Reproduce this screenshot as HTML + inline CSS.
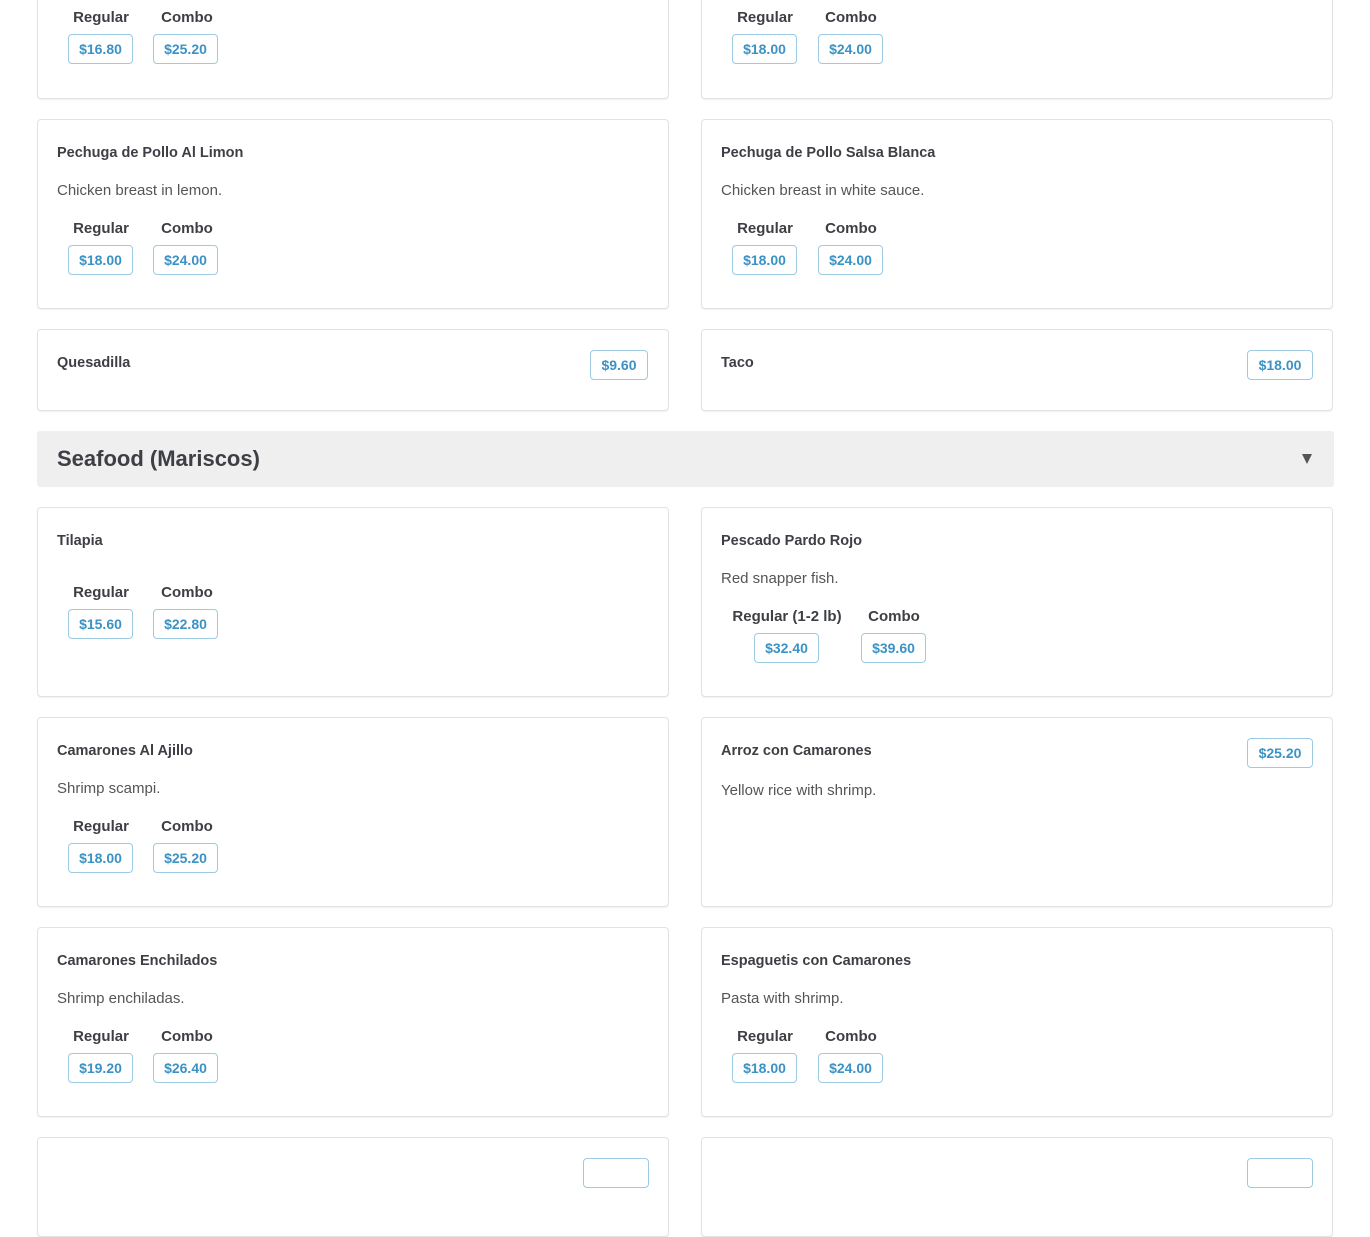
<!DOCTYPE html>
<html><head><meta charset="utf-8">
<style>
*{margin:0;padding:0;box-sizing:border-box}
body{width:1370px;height:1160px;background:#fff;font-family:"Liberation Sans",sans-serif;position:relative;overflow:hidden;color:#3d3f44}
.c{position:absolute;width:632px;border:1px solid #e2e2e2;border-radius:4px;background:#fff;box-shadow:0 1px 1px rgba(0,0,0,.06)}
.l{left:37px}.r{left:701px}
.t{position:absolute;left:19px;font-weight:bold;font-size:14.5px;line-height:20px;color:#3d3f44;white-space:nowrap}
.d{position:absolute;left:19px;font-size:15px;line-height:20px;color:#555;white-space:nowrap}
.lb{position:absolute;font-weight:bold;font-size:15px;line-height:20px;color:#3d3f44;text-align:center;width:120px;white-space:nowrap}
.p{position:absolute;height:30px;border:1px solid #9ccbe3;border-radius:4px;color:#3b92c4;font-weight:bold;font-size:14px;line-height:28px;text-align:center;width:65px;background:#fff}
.h{position:absolute;left:37px;top:431px;width:1297px;height:56px;background:#efefef;border-radius:3px}
.h span{position:absolute;left:20px;top:13px;font-size:22px;font-weight:bold;line-height:30px;color:#3d3f44}
.h i{position:absolute;right:22px;top:23px;width:0;height:0;border-left:5px solid transparent;border-right:5px solid transparent;border-top:10px solid #555}
</style></head><body>

<div class="c l" style="top:-92px;height:191px">
 <div class="lb" style="left:3px;top:99px">Regular</div><div class="lb" style="left:89px;top:99px">Combo</div>
 <div class="p" style="left:30px;top:125px">$16.80</div><div class="p" style="left:115px;top:125px">$25.20</div>
</div>
<div class="c r" style="top:-92px;height:191px">
 <div class="lb" style="left:3px;top:99px">Regular</div><div class="lb" style="left:89px;top:99px">Combo</div>
 <div class="p" style="left:30px;top:125px">$18.00</div><div class="p" style="left:116px;top:125px">$24.00</div>
</div>

<div class="c l" style="top:119px;height:190px">
 <div class="t" style="top:23px">Pechuga de Pollo Al Limon</div>
 <div class="d" style="top:61px">Chicken breast in lemon.</div>
 <div class="lb" style="left:3px;top:99px">Regular</div><div class="lb" style="left:89px;top:99px">Combo</div>
 <div class="p" style="left:30px;top:125px">$18.00</div><div class="p" style="left:115px;top:125px">$24.00</div>
</div>
<div class="c r" style="top:119px;height:190px">
 <div class="t" style="top:23px">Pechuga de Pollo Salsa Blanca</div>
 <div class="d" style="top:61px">Chicken breast in white sauce.</div>
 <div class="lb" style="left:3px;top:99px">Regular</div><div class="lb" style="left:89px;top:99px">Combo</div>
 <div class="p" style="left:30px;top:125px">$18.00</div><div class="p" style="left:116px;top:125px">$24.00</div>
</div>

<div class="c l" style="top:329px;height:82px">
 <div class="t" style="top:23px">Quesadilla</div>
 <div class="p" style="left:552px;top:20px;width:58px">$9.60</div>
</div>
<div class="c r" style="top:329px;height:82px">
 <div class="t" style="top:23px">Taco</div>
 <div class="p" style="left:545px;top:20px;width:66px">$18.00</div>
</div>

<div class="h"><span>Seafood (Mariscos)</span><i></i></div>

<div class="c l" style="top:507px;height:190px">
 <div class="t" style="top:23px">Tilapia</div>
 <div class="lb" style="left:3px;top:75px">Regular</div><div class="lb" style="left:89px;top:75px">Combo</div>
 <div class="p" style="left:30px;top:101px">$15.60</div><div class="p" style="left:115px;top:101px">$22.80</div>
</div>
<div class="c r" style="top:507px;height:190px">
 <div class="t" style="top:23px">Pescado Pardo Rojo</div>
 <div class="d" style="top:61px">Red snapper fish.</div>
 <div class="lb" style="left:25px;top:99px">Regular (1-2 lb)</div><div class="lb" style="left:132px;top:99px">Combo</div>
 <div class="p" style="left:52px;top:125px">$32.40</div><div class="p" style="left:159px;top:125px">$39.60</div>
</div>

<div class="c l" style="top:717px;height:190px">
 <div class="t" style="top:23px">Camarones Al Ajillo</div>
 <div class="d" style="top:61px">Shrimp scampi.</div>
 <div class="lb" style="left:3px;top:99px">Regular</div><div class="lb" style="left:89px;top:99px">Combo</div>
 <div class="p" style="left:30px;top:125px">$18.00</div><div class="p" style="left:115px;top:125px">$25.20</div>
</div>
<div class="c r" style="top:717px;height:190px">
 <div class="t" style="top:23px">Arroz con Camarones</div>
 <div class="d" style="top:63px">Yellow rice with shrimp.</div>
 <div class="p" style="left:545px;top:20px;width:66px">$25.20</div>
</div>

<div class="c l" style="top:927px;height:190px">
 <div class="t" style="top:23px">Camarones Enchilados</div>
 <div class="d" style="top:61px">Shrimp enchiladas.</div>
 <div class="lb" style="left:3px;top:99px">Regular</div><div class="lb" style="left:89px;top:99px">Combo</div>
 <div class="p" style="left:30px;top:125px">$19.20</div><div class="p" style="left:115px;top:125px">$26.40</div>
</div>
<div class="c r" style="top:927px;height:190px">
 <div class="t" style="top:23px">Espaguetis con Camarones</div>
 <div class="d" style="top:61px">Pasta with shrimp.</div>
 <div class="lb" style="left:3px;top:99px">Regular</div><div class="lb" style="left:89px;top:99px">Combo</div>
 <div class="p" style="left:30px;top:125px">$18.00</div><div class="p" style="left:116px;top:125px">$24.00</div>
</div>

<div class="c l" style="top:1137px;height:100px">
 <div class="p" style="left:545px;top:20px;width:66px"></div>
</div>
<div class="c r" style="top:1137px;height:100px">
 <div class="p" style="left:545px;top:20px;width:66px"></div>
</div>

</body></html>
